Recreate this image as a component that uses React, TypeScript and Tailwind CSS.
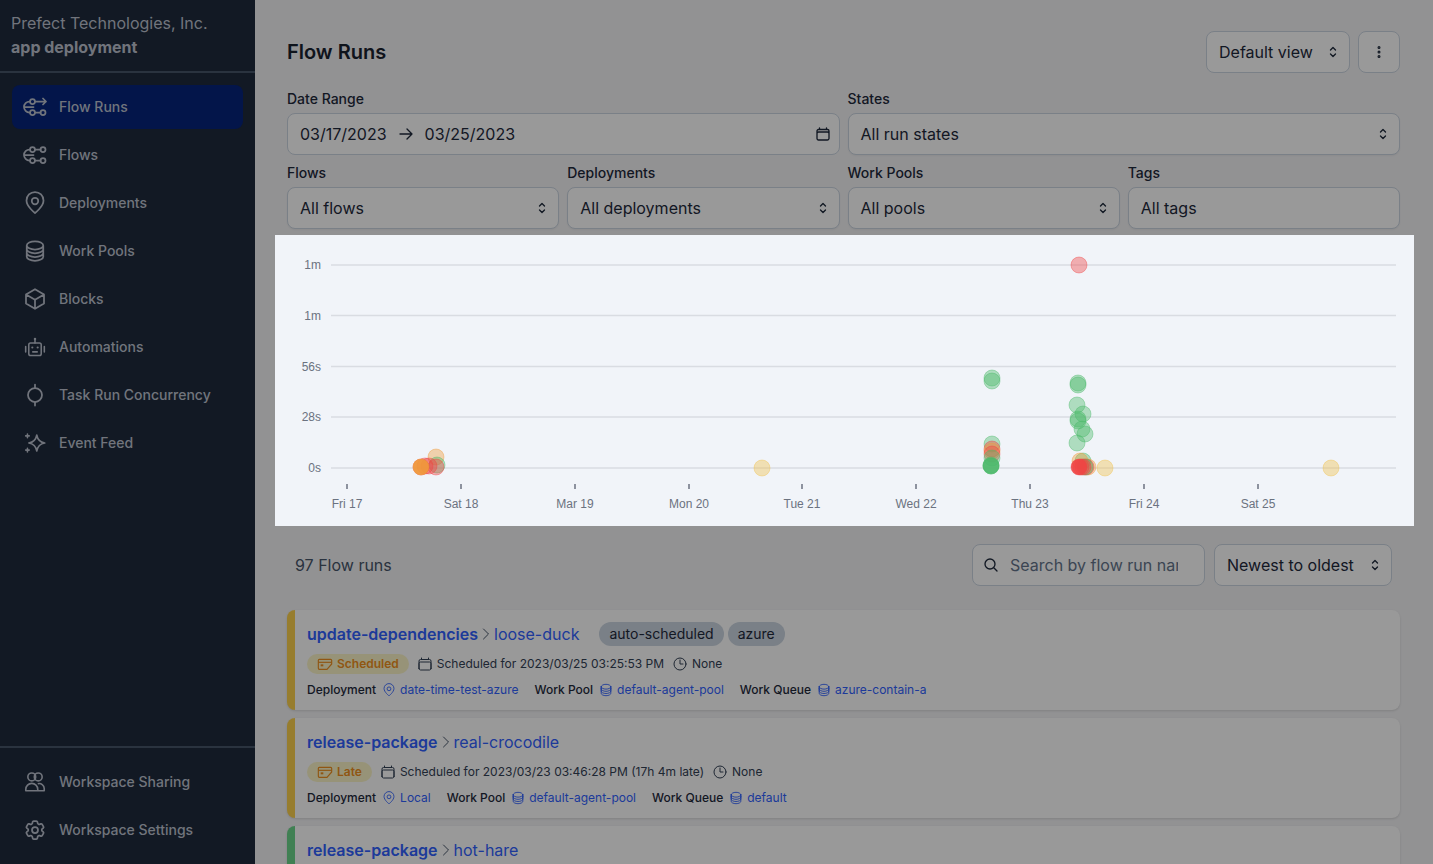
import {
  HiOutlineArrowRight,
  HiOutlineCircleStack,
  HiOutlineCube,
  HiOutlineCog6Tooth,
  HiOutlineCalendar,
  HiOutlineClock,
  HiOutlineChevronUpDown,
  HiOutlineMagnifyingGlass,
  HiOutlineEllipsisVertical,
  HiOutlineChevronRight,
} from "react-icons/hi2"

type IconProps = { className?: string }

function FlowRunsIcon({ className }: IconProps) {
  return (
    <svg viewBox="0 0 24 24" fill="none" stroke="currentColor" strokeWidth="1.5" className={className}>
      <circle cx="9.500" cy="6.500" r="2.500" />
      <path d="M12 6.500H23M20 3.500l3 3-3 3" strokeLinecap="round" strokeLinejoin="round" />
      <circle cx="9.500" cy="17.500" r="2.500" />
      <circle cx="20" cy="17.500" r="2.500" />
      <path d="M12 17.500H17.500M7 6.500H6.500a5.500 5.500 0 0 0 0 11H7M1.500 12h9" strokeLinecap="round" />
    </svg>
  )
}

function FlowsIcon({ className }: IconProps) {
  return (
    <svg viewBox="0 0 24 24" fill="none" stroke="currentColor" strokeWidth="1.5" className={className}>
      <circle cx="9.500" cy="6.500" r="2.500" />
      <circle cx="20" cy="6.500" r="2.500" />
      <path d="M12 6.500H17.500" strokeLinecap="round" />
      <circle cx="9.500" cy="17.500" r="2.500" />
      <circle cx="20" cy="17.500" r="2.500" />
      <path d="M12 17.500H17.500M7 6.500H6.500a5.500 5.500 0 0 0 0 11H7M1.500 12h9" strokeLinecap="round" />
    </svg>
  )
}

function PinIcon({ className }: IconProps) {
  return (
    <svg viewBox="0 0 24 24" fill="none" stroke="currentColor" strokeWidth="1.5" className={className}>
      <path d="M12 22s8.500-6.500 8.500-12.500a8.500 8.500 0 0 0-17 0C3.500 15.500 12 22 12 22Z" strokeLinejoin="round" />
      <circle cx="12" cy="10" r="3.250" />
    </svg>
  )
}

function RobotIcon({ className }: IconProps) {
  return (
    <svg viewBox="-1.500 -1.500 27 27" fill="none" stroke="currentColor" strokeWidth="1.5" className={className}>
      <rect x="5" y="7.500" width="14" height="14" rx="2" />
      <path d="M12 4.500v3M1.500 11.500v6M22.500 11.500v6M9.500 17.500h5" strokeLinecap="round" />
      <circle cx="12" cy="3" r="1.400" fill="currentColor" stroke="none" />
      <circle cx="9" cy="12.500" r="1.200" fill="currentColor" stroke="none" />
      <circle cx="15" cy="12.500" r="1.200" fill="currentColor" stroke="none" />
    </svg>
  )
}

function ConcurrencyIcon({ className }: IconProps) {
  return (
    <svg viewBox="0 0 24 24" fill="none" stroke="currentColor" strokeWidth="1.5" className={className}>
      <circle cx="12" cy="12" r="7" />
      <path d="M12 1.500V5M12 19v3.500" strokeLinecap="round" />
    </svg>
  )
}

function FeedIcon({ className }: IconProps) {
  return (
    <svg viewBox="-1.500 -1.500 27 27" fill="none" stroke="currentColor" strokeWidth="1.5" className={className}>
      <path d="M14 3c.9 5 3 8 9 9-6 1-8.100 4-9 9-.9-5-3-8-9-9 6-1 8.100-4 9-9Z" strokeLinejoin="round" />
      <path d="M3.500 2v4M1.500 4h4M3.500 18v4M1.500 20h4" strokeLinecap="round" />
    </svg>
  )
}

function SharingIcon({ className }: IconProps) {
  return (
    <svg viewBox="-1 -1 26 26" fill="none" stroke="currentColor" strokeWidth="1.5" className={className}>
      <circle cx="8.500" cy="6.500" r="4.250" />
      <circle cx="15.500" cy="6.500" r="4.250" />
      <path d="M2 21.500v-1.500a6.500 6.500 0 0 1 13 0v1.500ZM15 14c3.500-1.200 7 1.500 7 5v2.500h-7" strokeLinejoin="round" />
    </svg>
  )
}

function StateIcon({ className }: IconProps) {
  return (
    <svg viewBox="0 0 24 24" fill="none" stroke="currentColor" strokeWidth="1.750" className={className}>
      <path d="M2 6.500A1.500 1.500 0 0 1 3.500 5h17A1.500 1.500 0 0 1 22 6.500V12l-7 8H3.500A1.500 1.500 0 0 1 2 18.500Z" strokeLinejoin="round" />
      <path d="M2 9.500h20" />
      <rect x="5.500" y="12.500" width="4" height="3" fill="currentColor" stroke="none" />
    </svg>
  )
}

const navItems = [
  { icon: FlowRunsIcon, label: "Flow Runs", active: true },
  { icon: FlowsIcon, label: "Flows" },
  { icon: PinIcon, label: "Deployments" },
  { icon: HiOutlineCircleStack, label: "Work Pools" },
  { icon: HiOutlineCube, label: "Blocks" },
  { icon: RobotIcon, label: "Automations" },
  { icon: ConcurrencyIcon, label: "Task Run Concurrency" },
  { icon: FeedIcon, label: "Event Feed" },
]

const footerItems = [
  { icon: SharingIcon, label: "Workspace Sharing" },
  { icon: HiOutlineCog6Tooth, label: "Workspace Settings" },
]

function NavItem({ icon: Icon, label, active }: { icon: React.ComponentType<IconProps>; label: string; active?: boolean }) {
  return (
    <div className={`flex h-11 items-center gap-3 rounded-lg pl-[11px] text-sm font-medium text-[#bcc2cf] ${active ? "bg-[#05237c]" : ""}`}>
      <Icon className="size-6 shrink-0 stroke-[1.75]" />
      <span>{label}</span>
    </div>
  )
}

function Sidebar() {
  return (
    <aside className="flex w-[255px] shrink-0 flex-col bg-[#1e2a3c]">
      <div className="h-[73px] border-b-2 border-[#475569] px-[11px] pt-[11px] text-[#bcc2cf]">
        <div className="text-base leading-6">Prefect Technologies, Inc.</div>
        <div className="text-base leading-6 font-bold">app deployment</div>
      </div>
      <nav className="flex flex-1 flex-col gap-1 px-3 pt-3">
        {navItems.map((item) => (
          <NavItem key={item.label} {...item} />
        ))}
      </nav>
      <div className="flex h-[118px] flex-col gap-1 border-t-2 border-[#475569] px-3 pt-[12px]">
        {footerItems.map((item) => (
          <NavItem key={item.label} {...item} />
        ))}
      </div>
    </aside>
  )
}

function Field({ label, className, children }: { label: string; className?: string; children: React.ReactNode }) {
  return (
    <div className={className}>
      <div className="mb-1 text-sm leading-5 font-medium text-[#1e293b]">{label}</div>
      {children}
    </div>
  )
}

function SelectBox({ text, noArrow }: { text: string; noArrow?: boolean }) {
  return (
    <div className="flex h-[42px] items-center justify-between rounded-lg border border-[#cbd5e1] bg-white pr-2 pl-3 text-base text-[#1e293b] shadow-xs">
      <span>{text}</span>
      {!noArrow && <HiOutlineChevronUpDown className="size-4" strokeWidth={2} />}
    </div>
  )
}

type Dot = [number, number, string, number?]
const GREEN = "#4cb86a"
const RED = "#ef4444"
const ORANGE = "#ef9a3a"
const YELLOW = "#efc14b"

const dots: Dot[] = [
  [1079, 265, RED],
  [762, 468, YELLOW],
  [1105, 468, YELLOW],
  [1331, 468, YELLOW],
  [436, 457, ORANGE],
  [437, 465, GREEN],
  [436, 467, RED],
  [429, 466, RED],
  [425, 466, RED],
  [421, 467, RED, 0.4],
  [421, 467, ORANGE, 0.9],
  [992, 378, GREEN],
  [992, 381, GREEN],
  [992, 444, GREEN],
  [992, 449, RED],
  [992, 451, ORANGE],
  [992, 454, RED],
  [992, 458, GREEN],
  [991, 465, GREEN],
  [991, 466, GREEN],
  [991, 466, GREEN, 0.8],
  [1078, 383, GREEN],
  [1078, 385, GREEN],
  [1077, 405, GREEN],
  [1083, 414, GREEN],
  [1078, 419, GREEN],
  [1078, 421, GREEN],
  [1082, 429, GREEN],
  [1085, 434, GREEN],
  [1077, 443, GREEN],
  [1083, 461, GREEN],
  [1080, 461, ORANGE],
  [1088, 467, ORANGE],
  [1086, 467, RED],
  [1085, 467, GREEN],
  [1083, 467, RED],
  [1081, 467, RED],
  [1079, 467, RED, 0.9],
]

const gridLines = [
  { y: 265, label: "1m" },
  { y: 315.5, label: "1m" },
  { y: 366.5, label: "56s" },
  { y: 417, label: "28s" },
  { y: 468, label: "0s" },
]

const ticks = [
  { x: 347, label: "Fri 17" },
  { x: 461, label: "Sat 18" },
  { x: 575, label: "Mar 19" },
  { x: 689, label: "Mon 20" },
  { x: 802, label: "Tue 21" },
  { x: 916, label: "Wed 22" },
  { x: 1030, label: "Thu 23" },
  { x: 1144, label: "Fri 24" },
  { x: 1258, label: "Sat 25" },
]

// chart coordinates are page pixels, the viewBox is the highlighted box
function HistoryChart() {
  return (
    <div className="relative z-20 mt-1.5 -mr-3.5 -ml-3 h-[291px] bg-[#f1f4f9]">
      <svg viewBox="275 235 1139 291" className="block h-full w-full font-['Liberation_Sans',sans-serif]">
        {gridLines.map((line) => (
          <g key={line.y}>
            <line x1="331" x2="1396" y1={line.y} y2={line.y} stroke="#d9dce2" strokeWidth="1.5" />
            <text x="321" y={line.y + 4} textAnchor="end" fontSize="12" fill="#6b7280">
              {line.label}
            </text>
          </g>
        ))}
        {ticks.map((tick) => (
          <g key={tick.x}>
            <line x1={tick.x} x2={tick.x} y1="484" y2="489" stroke="#6b7280" strokeWidth="1.5" />
            <text x={tick.x} y="507.500" textAnchor="middle" fontSize="12" fill="#6b7280">
              {tick.label}
            </text>
          </g>
        ))}
        {dots.map(([x, y, color, alpha], i) => (
          <circle key={i} cx={x} cy={y} r="8" fill={color} fillOpacity={alpha ?? 0.4} stroke={color} strokeOpacity="0.4" strokeWidth="1" />
        ))}
      </svg>
    </div>
  )
}

function Tag({ text }: { text: string }) {
  return <span className="rounded-full bg-[#cbd5e1] px-2.5 py-0.5 text-sm leading-5 text-[#1e293b]">{text}</span>
}

function Meta({ label, icon: Icon, value }: { label: string; icon: React.ComponentType<IconProps>; value: string }) {
  return (
    <span className="flex items-center">
      <span className="font-medium text-[#1e293b]">{label}</span>
      <Icon className="mr-1 ml-1.5 size-3.5 text-[#3162ff]" />
      <span className="text-[#3162ff]">{value}</span>
    </span>
  )
}

type Run = {
  flow: string
  name: string
  tags?: string[]
  state?: string
  when?: string
  deployment?: string
  queue?: string
  bar: string
}

const runs: Run[] = [
  {
    flow: "update-dependencies",
    name: "loose-duck",
    tags: ["auto-scheduled", "azure"],
    state: "Scheduled",
    when: "Scheduled for 2023/03/25 03:25:53 PM",
    deployment: "date-time-test-azure",
    queue: "azure-contain-a",
    bar: "border-l-[#fcd14e]",
  },
  {
    flow: "release-package",
    name: "real-crocodile",
    state: "Late",
    when: "Scheduled for 2023/03/23 03:46:28 PM (17h 4m late)",
    deployment: "Local",
    queue: "default",
    bar: "border-l-[#fcd14e]",
  },
  { flow: "release-package", name: "hot-hare", bar: "border-l-[#6cd58a]" },
]

function RunCard({ run }: { run: Run }) {
  return (
    <div className={`h-[100px] shrink-0 rounded-lg border-l-8 bg-white pt-[12px] pl-3 shadow-sm ${run.bar}`}>
      <div className="flex h-6 items-center">
        <span className="text-base font-semibold text-[#3162ff]">{run.flow}</span>
        <HiOutlineChevronRight className="size-4 text-[#475569]" />
        <span className="text-base text-[#3162ff]">{run.name}</span>
        {run.tags && (
          <span className="ml-5 flex gap-1">
            {run.tags.map((tag) => (
              <Tag key={tag} text={tag} />
            ))}
          </span>
        )}
      </div>
      {run.state && (
        <>
          <div className="mt-2 flex h-5 items-center gap-2 text-xs text-[#334155]">
            <span className="flex h-5 items-center gap-1 rounded-full bg-[#fcf6c9] pr-2.5 pl-2.5 font-semibold text-[#f09020]">
              <StateIcon className="size-4" />
              {run.state}
            </span>
            <span className="flex items-center gap-1">
              <HiOutlineCalendar className="size-4" />
              {run.when}
            </span>
            <span className="flex items-center gap-1">
              <HiOutlineClock className="size-4" />
              None
            </span>
          </div>
          <div className="mt-[6px] flex h-5 items-center gap-4 text-xs">
            <Meta label="Deployment" icon={PinIcon} value={run.deployment ?? ""} />
            <Meta label="Work Pool" icon={HiOutlineCircleStack} value="default-agent-pool" />
            <Meta label="Work Queue" icon={HiOutlineCircleStack} value={run.queue ?? ""} />
          </div>
        </>
      )}
    </div>
  )
}

export default function App() {
  return (
    <div className="relative flex h-screen overflow-hidden bg-[#f4f4f6] font-[Inter,sans-serif]">
      <Sidebar />

      <main className="flex min-w-0 flex-1 flex-col pt-[31px] pr-[33px] pl-8">
        <header className="flex h-[42px] items-center justify-between">
          <h1 className="text-xl font-semibold text-[#1a2230]">Flow Runs</h1>
          <div className="flex gap-2">
            <div className="flex h-[42px] w-[144px] items-center justify-between rounded-lg border border-[#cbd5e1] bg-white pr-2 pl-3 text-base text-[#1e293b]">
              Default view
              <HiOutlineChevronUpDown className="size-4" strokeWidth={2} />
            </div>
            <div className="flex size-[42px] items-center justify-center rounded-lg border border-[#cbd5e1] bg-white text-[#1e293b]">
              <HiOutlineEllipsisVertical className="size-[18px]" strokeWidth={2.5} />
            </div>
          </div>
        </header>

        <div className="mt-4 grid grid-cols-4 gap-x-2 gap-y-2">
          <Field label="Date Range" className="col-span-2">
            <div className="flex h-[42px] items-center justify-between rounded-lg border border-[#cbd5e1] bg-white pr-2 pl-3 text-base text-[#1e293b]">
              <span className="flex items-center gap-[11px]">
                03/17/2023
                <HiOutlineArrowRight className="size-4" strokeWidth={2} />
                03/25/2023
              </span>
              <HiOutlineCalendar className="size-4" strokeWidth={2} />
            </div>
          </Field>
          <Field label="States" className="col-span-2">
            <SelectBox text="All run states" />
          </Field>
          <Field label="Flows">
            <SelectBox text="All flows" />
          </Field>
          <Field label="Deployments">
            <SelectBox text="All deployments" />
          </Field>
          <Field label="Work Pools">
            <SelectBox text="All pools" />
          </Field>
          <Field label="Tags">
            <SelectBox text="All tags" noArrow />
          </Field>
        </div>

        <HistoryChart />

        <div className="mt-[18px] flex h-[42px] items-center justify-between pr-2 pl-2">
          <span className="text-base text-[#475569]">97 Flow runs</span>
          <div className="flex gap-[9px]">
            <div className="flex h-[42px] w-[233px] items-center gap-[11px] rounded-lg border border-[#cbd5e1] bg-white pl-2.5 text-base">
              <HiOutlineMagnifyingGlass className="size-4 shrink-0 text-[#1e293b]" strokeWidth={2} />
              <input
                readOnly
                placeholder="Search by flow run name"
                className="w-[168px] bg-transparent outline-none placeholder:text-[#64748b]"
              />
            </div>
            <div className="flex h-[42px] w-[178px] items-center justify-between rounded-lg border border-[#cbd5e1] bg-white pr-2 pl-3 text-base text-[#1e293b]">
              Newest to oldest
              <HiOutlineChevronUpDown className="size-4" strokeWidth={2} />
            </div>
          </div>
        </div>

        <div className="mt-6 flex flex-col gap-2">
          {runs.map((run) => (
            <RunCard key={run.name} run={run} />
          ))}
        </div>
      </main>

      {/* tour overlay, the chart sits above it */}
      <div className="pointer-events-none absolute inset-0 z-10 bg-black/40 backdrop-blur-[0.5px]" />
    </div>
  )
}
